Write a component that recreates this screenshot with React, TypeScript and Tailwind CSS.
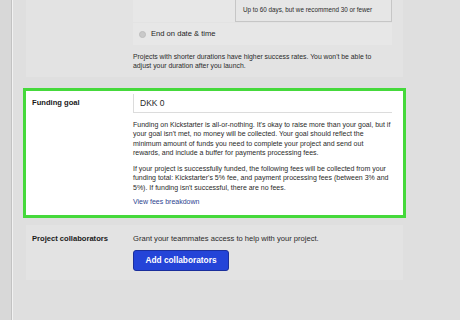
import React from 'react';

const font = { fontFamily: '"Liberation Sans", Arial, sans-serif' };

function FieldRow({ label, labelPad, children }: { label: string; labelPad: string; children: React.ReactNode }) {
  return (
    <div className="flex">
      <div className={`w-[107px] shrink-0 pl-[6px] text-[7.6px] font-bold leading-[9px] text-[#1a1a1a] ${labelPad}`}>{label}</div>
      <div className="w-[259px]">{children}</div>
    </div>
  );
}

export default function App() {
  return (
    <div className="flex h-[320px] w-[460px] overflow-hidden bg-[#dfdfdf] text-[#2a2a2a]" style={font}>
      <div className="w-[11px] shrink-0 bg-[#d8d8d8]" />
      <div className="w-px shrink-0 bg-[#c2c2c2]" />
      <div className="w-px shrink-0 bg-[#f2f2f2]" />
      <div className="ml-[10px] flex w-[383px] flex-col">
        {/* duration panel, top cut off */}
        <div className="mx-[3px] flex h-[77px] flex-col bg-[#e3e3e3] pl-[107px]">
          <div className="flex h-[22px] w-[259px] bg-[#e7e7e7]">
            <div className="w-[102px]" />
            <div className="flex flex-1 items-center border-x border-b border-[#c6c6c6] bg-[#e6e6e6] pl-[7px] text-[6.3px] leading-none">
              Up to 60 days, but we recommend 30 or fewer
            </div>
          </div>
          <div className="mt-px flex h-[22px] w-[259px] items-center bg-[#e7e7e7] pl-[6px]">
            <span className="h-[7px] w-[7px] rounded-full border border-[#bdbdbd] bg-[#c9c9c9]" />
            <span className="ml-[5px] text-[7.6px] text-[#1e1e1e]">End on date &amp; time</span>
          </div>
          <div className="mt-[7px] text-[6.85px] leading-[9px]">
            Projects with shorter durations have higher success rates. You won't be able to
            <br />
            adjust your duration after you launch.
          </div>
        </div>

        {/* funding goal, highlighted */}
        <div className="mt-[11px] h-[130px] border-[3px] border-[#45d93b] bg-white pt-[3px]">
          <FieldRow label="Funding goal" labelPad="pt-[4px]">
            <div className="flex h-[19px] items-center border-b border-l border-[#dcdcdc] pl-[6px] text-[8.5px]">
              DKK 0
            </div>
            <div className="mt-[7px] text-[7px] leading-[9.3px]">
              Funding on Kickstarter is all-or-nothing. It's okay to raise more than your goal, but if
              <br />
              your goal isn't met, no money will be collected. Your goal should reflect the
              <br />
              minimum amount of funds you need to complete your project and send out
              <br />
              rewards, and include a buffer for payments processing fees.
            </div>
            <div className="mt-[7px] text-[7px] leading-[9.3px]">
              If your project is successfully funded, the following fees will be collected from your
              <br />
              funding total: Kickstarter's 5% fee, and payment processing fees (between 3% and
              <br />
              5%). If funding isn't successful, there are no fees.
            </div>
            <div className="mt-[5px] text-[7px] leading-[9.3px] text-[#2e3f8f]">View fees breakdown</div>
          </FieldRow>
        </div>

        {/* collaborators panel */}
        <div className="mx-[3px] mt-[7px] h-[55px] bg-[#e3e3e3] pt-[9px]">
          <FieldRow label="Project collaborators" labelPad="">
            <div className="text-[7.6px] leading-[9px]">Grant your teammates access to help with your project.</div>
            <button className="mt-[7px] flex h-[21px] w-[96px] items-center justify-center rounded-[3px] border border-[#1b2f9c] bg-[#2444d8] text-[8.3px] font-bold text-white">
              Add collaborators
            </button>
          </FieldRow>
        </div>
      </div>
    </div>
  );
}
